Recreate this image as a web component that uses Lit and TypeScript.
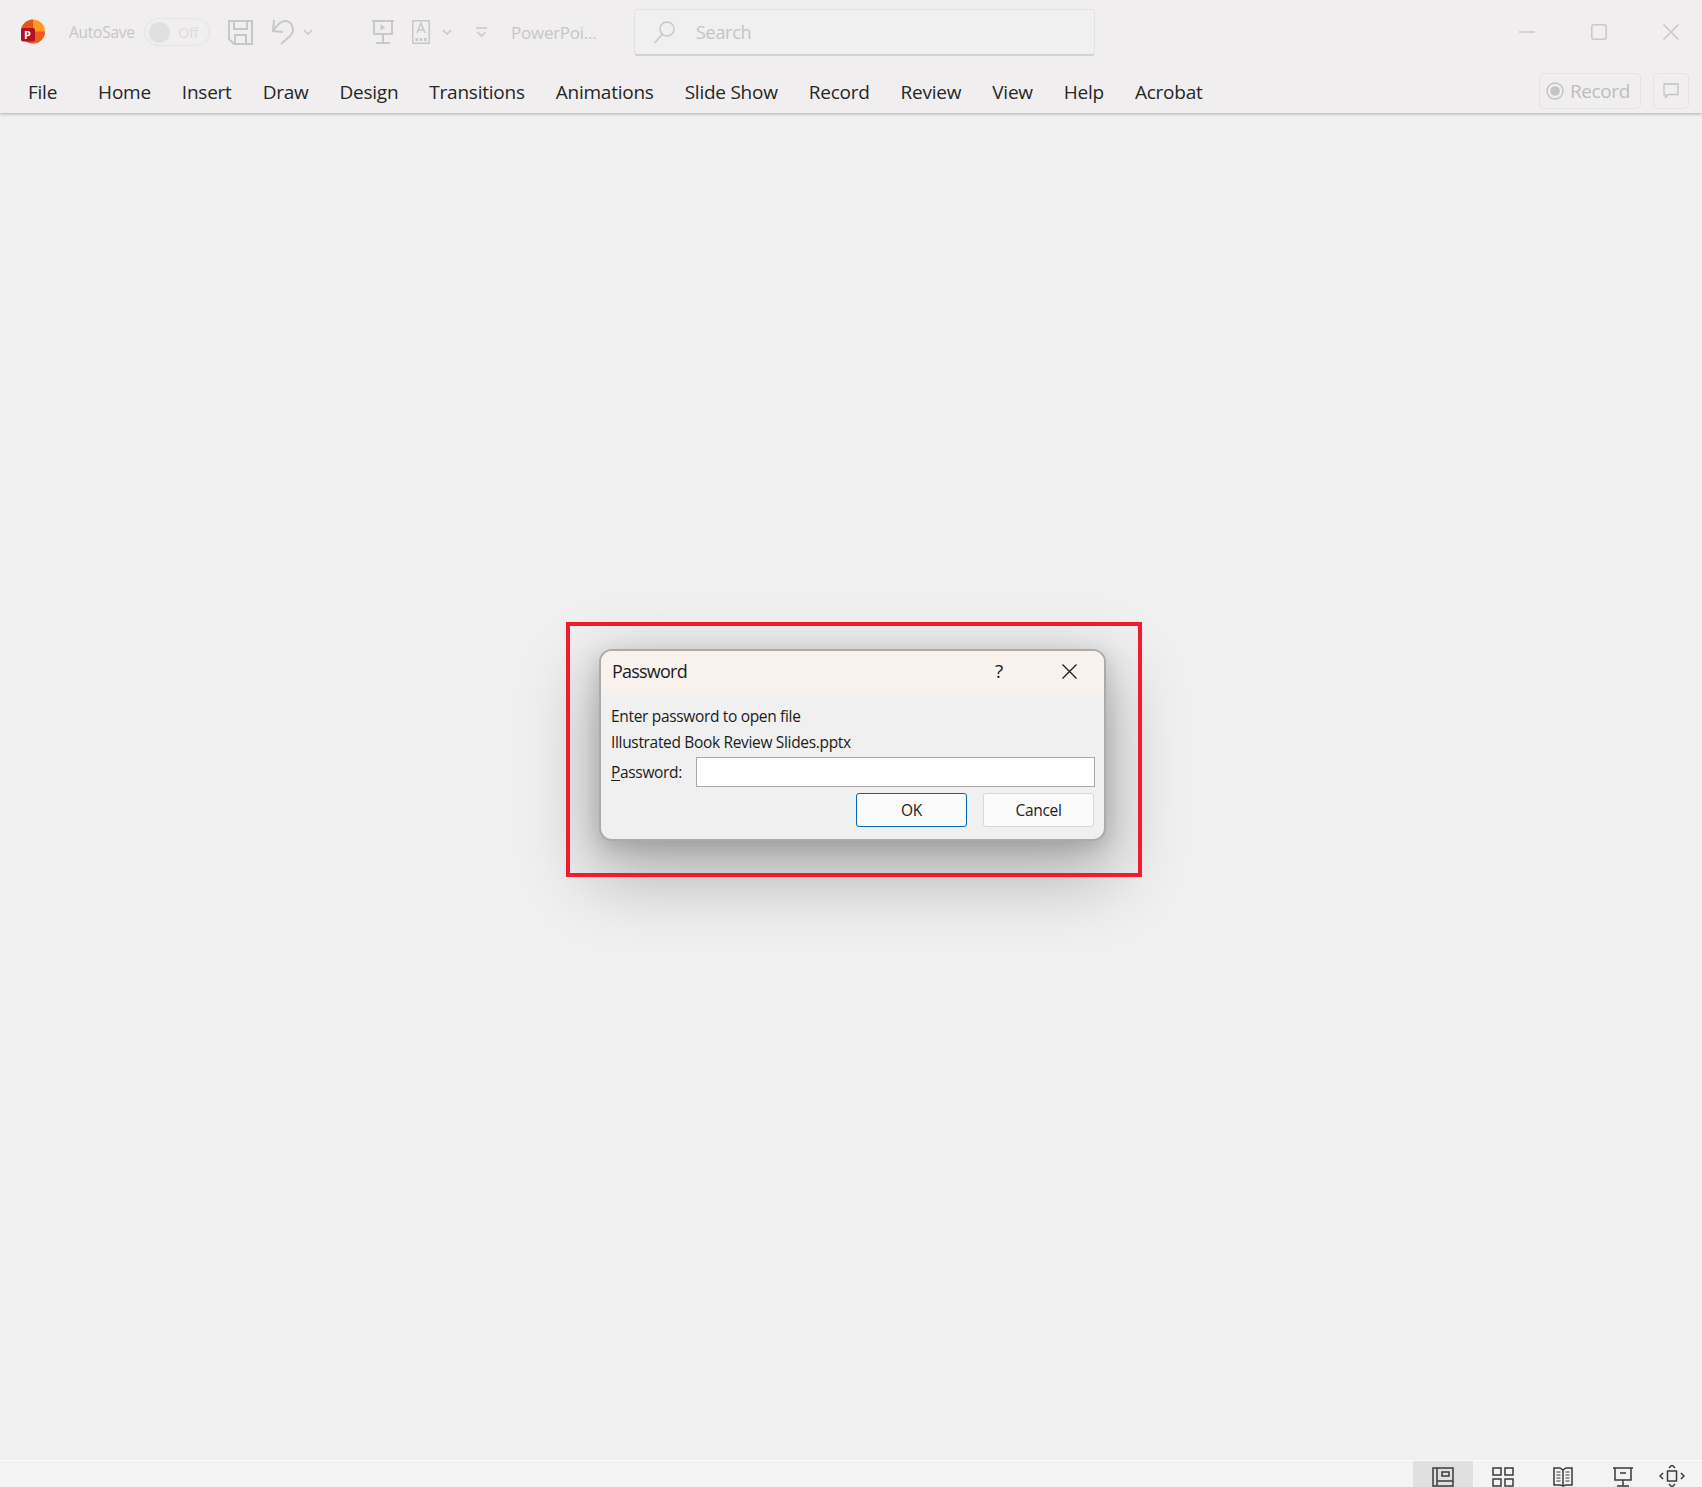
import { LitElement, html, css } from "lit";
import { customElement } from "lit/decorators.js";

const TABS = ["File", "Home", "Insert", "Draw", "Design", "Transitions", "Animations", "Slide Show", "Record", "Review", "View", "Help", "Acrobat"];

@customElement("app-root")
export class AppRoot extends LitElement {
  static styles = css`
    :host { display: block; width: 1702px; height: 1487px; font-family: "Open Sans", "Noto Sans", sans-serif; background: #f0f0f0; overflow: hidden; }
    .page { display: flex; flex-direction: column; height: 1487px; }
    svg { display: block; fill: none; flex: none; }
    header { height: 113px; flex: none; background: #f0eeef; box-shadow: 0 1px 3px rgba(0,0,0,.28); position: relative; z-index: 1; display: flex; flex-direction: column; }
    .title { height: 64px; display: flex; align-items: center; color: #c4c4c4; flex: none; }
    .logo { margin-left: 19px; }
    .autosave { margin-left: 24px; font-size: 15.5px; letter-spacing: -.25px; width: 74px; white-space: nowrap; color: #c6c6c6; }
    .toggle { width: 66px; height: 28px; border: 1px solid #e4e4e4; border-radius: 15px; margin-left: 1px; display: flex; align-items: center; padding-left: 4px; box-sizing: border-box; gap: 8px; font-size: 14.5px; letter-spacing: -.3px; color: #dcdcdc; }
    .knob { width: 21px; height: 21px; border-radius: 50%; background: #e0e0e0; flex: none; }
    .save { margin-left: 18px; }
    .undo { margin-left: 18px; }
    .chev { margin-left: 8px; }
    .present { margin-left: 59px; }
    .textbox { margin-left: 18px; }
    .chev2 { margin-left: 12px; }
    .more { margin-left: 24px; }
    .doc { margin-left: 24px; font-size: 17px; letter-spacing: -.25px; white-space: nowrap; width: 95px; color: #c6c6c6; }
    .search { margin-left: 28px; width: 461px; height: 47px; box-sizing: border-box; background: #f0f0f0; border: 1px solid #e2e2e2; border-bottom: 2px solid #d2d2d2; border-radius: 4px; display: flex; align-items: center; padding-left: 19px; gap: 20px; font-size: 18px; letter-spacing: -.3px; color: #c4c4c4; margin-top: 1px; }
    .winbtns { margin-left: auto; display: flex; align-items: center; gap: 56px; padding-right: 23px; }
    .tabs { flex: 1; display: flex; align-items: flex-start; padding-left: 28px; gap: 31px; font-size: 19px; letter-spacing: -.24px; color: #262626; white-space: nowrap; position: relative; }
    .tab { line-height: 28px; margin-top: 14px; }
    .tab.first { margin-right: 10px; }
    .right { margin-left: auto; display: flex; gap: 12px; padding-right: 13px; margin-top: 9px; }
    .rec { width: 102px; height: 36px; box-sizing: border-box; border: 1px solid #e4e4e4; border-radius: 5px; display: flex; align-items: center; padding-left: 6px; gap: 6px; color: #bdbdbd; font-size: 19px; letter-spacing: -.4px; }
    .cmt { width: 36px; height: 36px; box-sizing: border-box; border: 1px solid #e4e4e4; border-radius: 5px; display: flex; align-items: center; justify-content: center; }
    main { flex: 1; position: relative; background: #f0f0f0; }
    .redbox { position: absolute; left: 566px; top: 509px; width: 576px; height: 255px; box-sizing: border-box; border: 4px solid #ee1c2e; z-index: 2; pointer-events: none; }
    .dialog { position: absolute; left: 599px; top: 536px; width: 507px; height: 192px; box-sizing: border-box; background: #f0f0f0; border: 2px solid #ababab; border-radius: 13px; box-shadow: 0 28px 70px 10px rgba(0,0,0,.26), 0 6px 22px rgba(0,0,0,.16); overflow: hidden; display: flex; flex-direction: column; color: #1c1c1c; z-index: 1; font-size: 15.5px; letter-spacing: -.33px; }
    .dlg-title { height: 44px; flex: none; background: #f8f1ec; display: flex; align-items: center; padding: 0 0 4px 11px; box-sizing: border-box; font-size: 18px; letter-spacing: -.78px; }
    .help { margin-left: auto; font-size: 19px; width: 14px; }
    .dlg-close { margin-left: 53px; margin-right: 27px; }
    .dlg-body { padding: 8px 8px 0 10px; display: flex; flex-direction: column; flex: 1; }
    .line { line-height: 26px; white-space: nowrap; }
    .pw-row { display: flex; align-items: center; margin-top: 2px; }
    .pw-row label { width: 85px; flex: none; }
    .pw-row label u { text-underline-offset: 2px; }
    .input { width: 399px; height: 30px; box-sizing: border-box; background: #fff; border: 1px solid #a8a8a8; }
    .buttons { display: flex; justify-content: flex-end; gap: 16px; margin-top: 6px; padding-right: 2px; }
    .btn { width: 111px; height: 34px; box-sizing: border-box; background: #fbfbfb; border: 1px solid #d8d8d8; border-radius: 3px; display: flex; align-items: center; justify-content: center; }
    .btn.primary { border: 1px solid #0067c0; }
    footer { height: 27px; flex: none; background: #f3f3f3; border-top: 1px solid #fbfbfb; display: flex; align-items: flex-start; justify-content: flex-end; box-sizing: border-box; padding-right: 12px; }
    .view { width: 60px; height: 26px; display: flex; justify-content: center; padding-top: 6px; box-sizing: border-box; overflow: hidden; flex: none; }
    .view.active { background: #e0e0e0; }
    .view.fit { width: 36px; margin-left: 1px; padding-top: 4px; }
  `;

  render() {
    const g = "#c8c8c8";
    return html`<div class="page">
      <header>
        <div class="title">
          <svg class="logo" width="26" height="26" viewBox="0 0 26 26">
            <circle cx="14" cy="12.5" r="12" fill="#ff9a1f"/>
            <path d="M14 .5A12 12 0 0 0 2 12.500h12z" fill="#e8541e"/>
            <path d="M14 12.500h12A12 12 0 0 1 14 24.500 12 12 0 0 1 5 20.500v-8z" fill="#ee5a24"/>
            <rect x="2" y="9" width="14" height="13.500" rx="2" fill="#b0101f"/>
            <text x="5" y="20" font-family="Open Sans" font-size="11" font-weight="700" fill="#fff">P</text>
          </svg>
          <span class="autosave">AutoSave</span>
          <div class="toggle"><span class="knob"></span>Off</div>
          <svg class="save" width="25" height="25" viewBox="0 0 25 25" stroke="${g}" stroke-width="2"><path d="M1 1h23v23H6l-5-5zM6 1v8h13V1M7 24v-9h11v9"/></svg>
          <svg class="undo" width="24" height="26" viewBox="0 0 24 26" stroke="${g}" stroke-width="2"><path d="M3 1L2 12l10 1M2 12C6 6 10 2 14 2c5 0 8 4 8 9 0 3-2 5-4 7l-8 7"/></svg>
          <svg class="chev" width="10" height="6" viewBox="0 0 10 6" stroke="${g}" stroke-width="1.500"><path d="M1 1l4 4 4-4"/></svg>
          <svg class="present" width="22" height="24" viewBox="0 0 22 24" stroke="${g}" stroke-width="2"><path d="M0 1h22M2 1v13h18V1M11 14v8M4 23h14"/><path d="M8.500 4.500v6l5-3z" fill="${g}" stroke="none"/></svg>
          <svg class="textbox" width="18" height="24" viewBox="0 0 18 24" stroke="${g}" stroke-width="1.500"><rect x=".75" y=".75" width="16.500" height="22.500"/><path d="M5 13l4-10 4 10M6.500 10h5"/><path d="M3.500 18h2.500v3h-2.500zM7.700 18h2.500v3h-2.500zM12 18h2.500v3h-2.500z" fill="${g}" stroke="none"/></svg>
          <svg class="chev2" width="10" height="6" viewBox="0 0 10 6" stroke="${g}" stroke-width="1.500"><path d="M1 1l4 4 4-4"/></svg>
          <svg class="more" width="11" height="10" viewBox="0 0 11 10" stroke="${g}" stroke-width="1.500"><path d="M0 1h11M1.500 5l4 4 4-4"/></svg>
          <span class="doc">PowerPoi...</span>
          <div class="search">
            <svg width="22" height="23" viewBox="0 0 22 23" stroke="${g}" stroke-width="1.500"><circle cx="13" cy="8" r="7"/><path d="M8 13.500L.7 22"/></svg>
            Search
          </div>
          <div class="winbtns">
            <svg width="16" height="2" viewBox="0 0 16 2" stroke="${g}" stroke-width="1.500"><path d="M0 1h16"/></svg>
            <svg width="16" height="16" viewBox="0 0 16 16" stroke="${g}" stroke-width="1.500"><rect x=".75" y=".75" width="14.500" height="14.500" rx="2"/></svg>
            <svg width="16" height="16" viewBox="0 0 16 16" stroke="${g}" stroke-width="1.500"><path d="M.5.500l15 15M15.500.500l-15 15"/></svg>
          </div>
        </div>
        <div class="tabs">
          ${TABS.map((t, i) => html`<span class="tab ${i === 0 ? "first" : ""}">${t}</span>`)}
          <div class="right">
            <div class="rec">
              <svg width="18" height="18" viewBox="0 0 18 18"><circle cx="9" cy="9" r="8" stroke="#c4c4c4" stroke-width="1.500"/><circle cx="9" cy="9" r="4.800" fill="#c4c4c4"/></svg>
              Record
            </div>
            <div class="cmt">
              <svg width="16" height="16" viewBox="0 0 16 16" stroke="#c4c4c4" stroke-width="1.300"><path d="M1 1h14v10.500H5.500L2.500 14.500v-3H1z"/></svg>
            </div>
          </div>
        </div>
      </header>
      <main>
        <div class="redbox"></div>
        <div class="dialog">
          <div class="dlg-title">
            Password
            <span class="help">?</span>
            <svg class="dlg-close" width="15" height="15" viewBox="0 0 15 15" stroke="#1c1c1c" stroke-width="1.300"><path d="M.5.500l14 14M14.500.500l-14 14"/></svg>
          </div>
          <div class="dlg-body">
            <div class="line">Enter password to open file</div>
            <div class="line">Illustrated Book Review Slides.pptx</div>
            <div class="pw-row"><label><u>P</u>assword:</label><div class="input"></div></div>
            <div class="buttons">
              <div class="btn primary">OK</div>
              <div class="btn">Cancel</div>
            </div>
          </div>
        </div>
      </main>
      <footer>
        <div class="view active">
          <svg width="22" height="20" viewBox="0 0 22 20" stroke="#3a3a3a" stroke-width="1.500"><path d="M1 1h20v18H1zM5 1v18M5 14h16"/><rect x="10" y="5" width="7" height="4"/></svg>
        </div>
        <div class="view">
          <svg width="22" height="20" viewBox="0 0 22 20" stroke="#3a3a3a" stroke-width="1.500"><rect x="1" y="1" width="8" height="7"/><rect x="13" y="1" width="8" height="7"/><rect x="1" y="12" width="8" height="7"/><rect x="13" y="12" width="8" height="7"/></svg>
        </div>
        <div class="view">
          <svg width="20" height="20" viewBox="0 0 20 20" stroke="#3a3a3a" stroke-width="1.500"><path d="M10 3v16M1 1h6l3 2 3-2h6v17h-6l-3 1-3-1H1z"/><path d="M3.500 5h4M3.500 8h4M3.500 11h4M3.500 14h4M12.500 5h4M12.500 8h4M12.500 11h4M12.500 14h4" stroke-width="1"/></svg>
        </div>
        <div class="view">
          <svg width="20" height="20" viewBox="0 0 20 20" stroke="#3a3a3a" stroke-width="1.500"><path d="M0 1h20M2 1v12h16V1M10 13v6M4 19h12M7 6h6"/></svg>
        </div>
        <div class="view fit">
          <svg width="26" height="22" viewBox="0 0 26 22" stroke="#3a3a3a" stroke-width="1.500"><rect x="8.500" y="6" width="9" height="10"/><path d="M10 3l3-3 3 3M10 19l3 3 3-3M4 8l-3 3 3 3M22 8l3 3-3 3"/></svg>
        </div>
      </footer>
    </div>`;
  }
}
